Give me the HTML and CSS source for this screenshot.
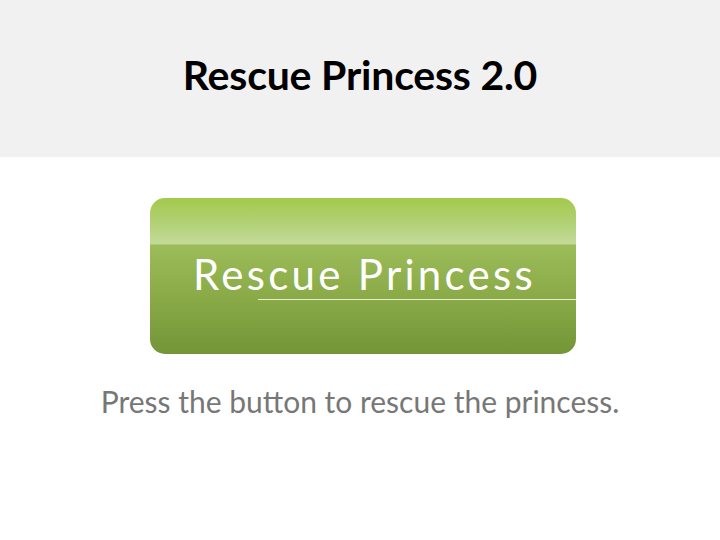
FILE: index.html
```html
<!DOCTYPE html>
<html lang="en">
<head>
  <meta charset="UTF-8">
  <meta name="viewport" content="width=device-width, initial-scale=1.0">
  <title>Rescue Princess 2.0</title>
  <link rel="stylesheet" href="styles.css">
</head>
<body>
  <header class="top">
    <h1>Rescue Princess 2.0</h1>
  </header>
  <main class="stage">
    <button class="rescue-btn" type="button">Rescue Princess</button>
    <p class="hint">Press the button to rescue the princess.</p>
  </main>
</body>
</html>
```
FILE: styles.css
```css
/* Basic reset */
* {
  margin: 0;
  padding: 0;
  box-sizing: border-box;
}
body {
  font-family: 'Lato', 'Open Sans', sans-serif;
  background-color: #fff;
  color: #000;
  width: 720px;
  height: 540px;
  overflow: hidden;
}
.top {
  height: 157px;
  background-color: #f1f1f1;
  display: flex;
  justify-content: center;
  padding-top: 51px;
}
h1 {
  font-size: 41px;
  font-weight: 700;
  line-height: 48px;
  letter-spacing: -0.2px;
}
.stage {
  display: flex;
  flex-direction: column;
  align-items: center;
  padding-top: 41px;
}
.rescue-btn {
  position: relative;
  width: 426px;
  height: 156px;
  margin-left: 6px;
  border: none;
  border-radius: 15px;
  font-family: inherit;
  font-size: 42px;
  letter-spacing: 3.3px;
  color: #fff;
  padding-bottom: 4px;
  padding-left: 3px;
  background: linear-gradient(to bottom,
    #a3c94c 0px, #b0d070 22px, #c3da9a 46px,
    #9cbc5a 47px, #8aaa48 100px, #739536 156px);
  cursor: pointer;
}
/* thin light rule under the label */
.rescue-btn::after {
  content: '';
  position: absolute;
  left: 108px;
  right: 0;
  top: 101px;
  height: 1px;
  background-color: #e4eed0;
}
.hint {
  margin-top: 29px;
  font-size: 30px;
  color: #777;
}
```
